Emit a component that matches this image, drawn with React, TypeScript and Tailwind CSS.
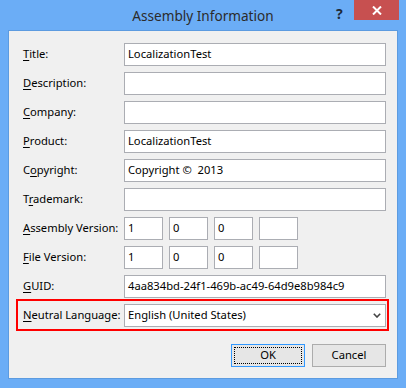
import React from 'react';

type Field = { label: string; key: number; value?: string };

const fields: Field[] = [
  { label: 'Title:', key: 0, value: 'LocalizationTest' },
  { label: 'Description:', key: 0 },
  { label: 'Company:', key: 0 },
  { label: 'Product:', key: 0, value: 'LocalizationTest' },
  { label: 'Copyright:', key: 1, value: 'Copyright ©  2013' },
  { label: 'Trademark:', key: 1 },
];

// label with the access key letter underlined
function Label({ text, k }: { text: string; k: number }) {
  return (
    <div className="w-[101px] shrink-0 text-[11.2px] text-[#000] whitespace-pre">
      {text.slice(0, k)}
      <span className="underline underline-offset-2">{text[k]}</span>
      {text.slice(k + 1)}
    </div>
  );
}

function Box({ value, className = '' }: { value?: string; className?: string }) {
  return (
    <div
      className={`h-[23px] border border-[#abadb3] bg-white px-[3px] flex items-center text-[11.2px] text-[#000] whitespace-pre ${className}`}
    >
      {value}
    </div>
  );
}

function VersionRow({ label, values }: { label: string; values: string[] }) {
  return (
    <div className="flex items-center h-[23px]">
      <Label text={label} k={0} />
      <div className="flex gap-[6px]">
        {values.map((v, i) => (
          <Box key={i} value={v} className="w-[39px]" />
        ))}
      </div>
    </div>
  );
}

export default function App() {
  return (
    <div className="relative w-[406px] h-[388px] bg-[#6badf6] font-['Noto_Sans',sans-serif]">
      <div className="h-[30px] flex items-center justify-center pt-[2px] text-[13.6px] text-[#2b2b2b]">
        Assembly Information
      </div>
      <div className="absolute left-[336px] top-[3px] text-[14px] font-bold text-[#1e2a38]">?</div>
      <div className="absolute top-0 right-[7px] w-[45px] h-[20px] bg-[#c75050] flex items-center justify-center">
        <svg width="10" height="9" viewBox="0 0 10 9">
          <path d="M1 0.5 L9 8.5 M9 0.5 L1 8.5" stroke="#fff" strokeWidth="2" />
        </svg>
      </div>

      <div className="mx-[8px] h-[349px] bg-[#f0f0f0] border border-[#5c9be0] pt-[12px] pl-[14px] pr-[11px]">
        <div className="flex flex-col gap-[6px]">
          {fields.map((f) => (
            <div key={f.label} className="flex items-center h-[23px]">
              <Label text={f.label} k={f.key} />
              <Box value={f.value} className="flex-1" />
            </div>
          ))}
          <VersionRow label="Assembly Version:" values={['1', '0', '0', '']} />
          <VersionRow label="File Version:" values={['1', '0', '0', '']} />
          <div className="flex items-center h-[23px]">
            <Label text="GUID:" k={0} />
            <Box value="4aa834bd-24f1-469b-ac49-64d9e8b984c9" className="flex-1" />
          </div>
          <div className="relative flex items-center h-[23px]">
            <Label text="Neutral Language:" k={0} />
            <div className="flex-1 h-[23px] border border-[#abadb3] bg-white pl-[3px] pr-[4px] flex items-center justify-between text-[11.2px] text-[#000]">
              <span>English (United States)</span>
              <svg width="8" height="5" viewBox="0 0 8 5">
                <path d="M0.8 0.8 L4 4 L7.2 0.8" fill="none" stroke="#444" strokeWidth="1.6" />
              </svg>
            </div>
            <div className="pointer-events-none absolute -top-[5px] -left-[7px] -right-[3px] -bottom-[4px] border-2 border-[#ff0000]" />
          </div>
        </div>

        <div className="mt-[17px] flex justify-end gap-[7px]">
          <button className="w-[74px] h-[23px] border border-[#3399ff] bg-[#e6e6e6] p-[2px]">
            <div className="w-full h-full border border-dotted border-[#000] flex items-center justify-center text-[11.2px] text-[#000]">
              OK
            </div>
          </button>
          <button className="w-[74px] h-[23px] border border-[#acacac] bg-[#e6e6e6] flex items-center justify-center text-[11.2px] text-[#000]">
            Cancel
          </button>
        </div>
      </div>
    </div>
  );
}
